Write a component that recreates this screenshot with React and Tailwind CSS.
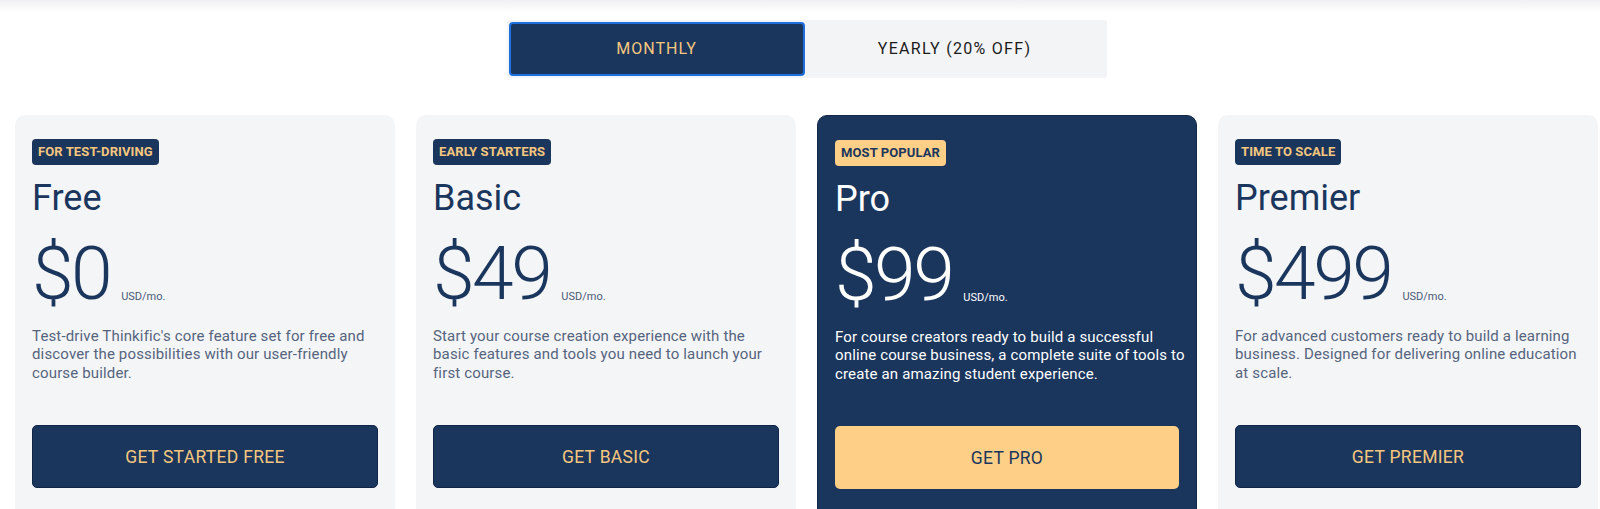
import React from "react";

const plans = [
  {
    badge: "FOR TEST-DRIVING",
    name: "Free",
    price: "$0",
    desc: [
      "Test-drive Thinkific's core feature set for free and",
      "discover the possibilities with our user-friendly",
      "course builder.",
    ],
    cta: "GET STARTED FREE",
  },
  {
    badge: "EARLY STARTERS",
    name: "Basic",
    price: "$49",
    desc: [
      "Start your course creation experience with the",
      "basic features and tools you need to launch your",
      "first course.",
    ],
    cta: "GET BASIC",
  },
  {
    badge: "MOST POPULAR",
    name: "Pro",
    price: "$99",
    desc: [
      "For course creators ready to build a successful",
      "online course business, a complete suite of tools to",
      "create an amazing student experience.",
    ],
    cta: "GET PRO",
    featured: true,
  },
  {
    badge: "TIME TO SCALE",
    name: "Premier",
    price: "$499",
    desc: [
      "For advanced customers ready to build a learning",
      "business. Designed for delivering online education",
      "at scale.",
    ],
    cta: "GET PREMIER",
  },
];

function Card({ p }) {
  const f = p.featured;
  return (
    <div
      className={`w-[380px] h-[420px] shrink-0 rounded-[10px] px-[17px] pt-[24px] flex flex-col ${
        f ? "bg-[#1b365d] border border-[#14294a]" : "bg-[#f4f5f7]"
      }`}
    >
      <div className="flex">
        <span
          className={`h-[26px] px-[6px] flex items-center rounded-[4px] text-[13px] font-bold tracking-[0.1px] ${
            f ? "bg-[#fecf86] text-[#1b365d]" : "bg-[#1b365d] text-[#f5c77e]"
          }`}
        >
          {p.badge}
        </span>
      </div>
      <div
        className={`mt-[13px] text-[36px] leading-[40px] font-normal ${
          f ? "text-white" : "text-[#1b365d]"
        }`}
      >
        {p.name}
      </div>
      <div className="mt-[18px] flex items-end">
        <span
          className={`text-[75px] leading-[75px] font-light tracking-[-2.5px] ${
            f ? "text-white" : "text-[#1b365d]"
          }`}
        >
          {p.price}
        </span>
        <span
          className={`ml-[11px] mb-[8px] text-[11px] leading-[12px] ${
            f ? "text-white" : "text-[#4a5a78]"
          }`}
        >
          USD/mo.
        </span>
      </div>
      <div
        className={`mt-[16px] text-[15px] leading-[18.4px] tracking-[0.15px] ${
          f ? "text-white" : "text-[#56647e]"
        }`}
      >
        {p.desc.map((l) => (
          <div key={l} className="whitespace-nowrap">
            {l}
          </div>
        ))}
      </div>
      <button
        className={`mt-[43px] h-[63px] w-full shrink-0 rounded-[5px] text-[17.5px] tracking-[0.3px] flex items-center justify-center ${
          f
            ? "bg-[#fecf86] text-[#1b365d]"
            : "bg-[#1b365d] text-[#f5c77e] border border-[#0f2446]"
        }`}
      >
        {p.cta}
      </button>
    </div>
  );
}

export default function App() {
  return (
    <div
      className="w-[1600px] h-[509px] bg-white overflow-hidden relative"
      style={{ fontFamily: "Roboto, 'Noto Sans', sans-serif" }}
    >
      <div className="absolute top-0 left-0 right-0 h-[12px] bg-gradient-to-b from-[#f0f0f2] to-white" />
      <div className="relative pt-[20px] flex justify-center">
        <div className="ml-[13px] w-[600px] h-[58px] bg-[#f3f4f6] rounded-[3px] p-[2px] flex">
          <div className="w-[296px] h-[54px] bg-[#1b365d] border-2 border-[#1f6fdc] rounded-[4px] flex items-center justify-center text-[#f5c77e] text-[16px] tracking-[1px]">
            MONTHLY
          </div>
          <div className="flex-1 flex items-center justify-center text-[#1b1b1b] text-[16px] tracking-[1.3px]">
            YEARLY (20% OFF)
          </div>
        </div>
      </div>
      <div className="relative mt-[37px] pl-[15px] flex gap-[21px]">
        {plans.map((p) => (
          <Card key={p.name} p={p} />
        ))}
      </div>
    </div>
  );
}
